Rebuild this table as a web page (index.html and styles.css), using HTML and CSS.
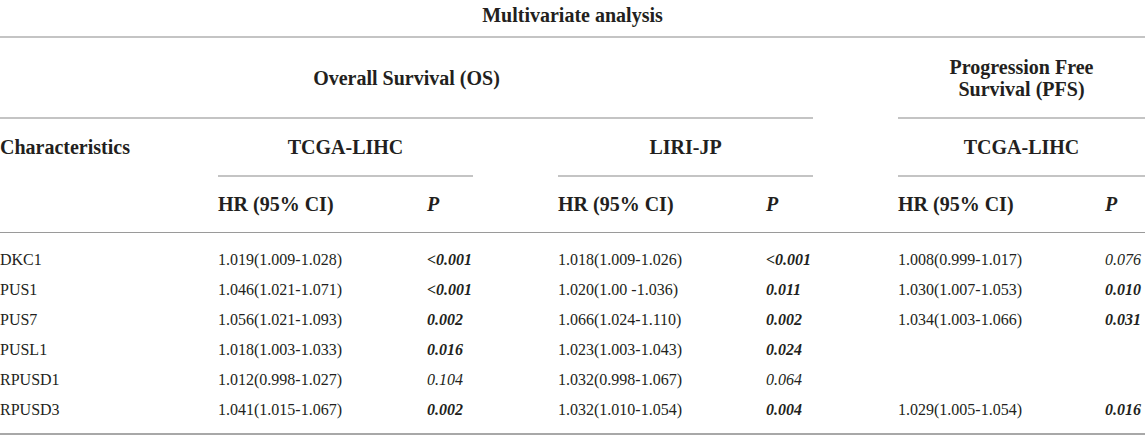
FILE: index.html
```html
<!DOCTYPE html>
<html lang="en">
<head>
<meta charset="utf-8">
<title>Multivariate analysis</title>
<link rel="stylesheet" href="styles.css">
</head>
<body>
<div class="table">
  <div class="title">Multivariate analysis</div>
  <div class="thead">
    <div class="group os">Overall Survival (OS)</div>
    <div class="group pfs">Progression Free<br>Survival (PFS)</div>

    <div class="char">Characteristics</div>
    <div class="cohort c-tcga">TCGA-LIHC</div>
    <div class="cohort c-liri">LIRI-JP</div>
    <div class="cohort c-pfs">TCGA-LIHC</div>

    <div class="sub"></div>
    <div class="sub">HR (95% CI)</div>
    <div class="sub pv">P</div>
    <div class="sub">HR (95% CI)</div>
    <div class="sub pv">P</div>
    <div class="sub">HR (95% CI)</div>
    <div class="sub pv">P</div>
  </div>
  <div class="tbody">
    <div>DKC1</div><div>1.019(1.009-1.028)</div><div class="sig">&lt;0.001</div><div>1.018(1.009-1.026)</div><div class="sig">&lt;0.001</div><div>1.008(0.999-1.017)</div><div class="ns">0.076</div>
    <div>PUS1</div><div>1.046(1.021-1.071)</div><div class="sig">&lt;0.001</div><div>1.020(1.00 -1.036)</div><div class="sig">0.011</div><div>1.030(1.007-1.053)</div><div class="sig">0.010</div>
    <div>PUS7</div><div>1.056(1.021-1.093)</div><div class="sig">0.002</div><div>1.066(1.024-1.110)</div><div class="sig">0.002</div><div>1.034(1.003-1.066)</div><div class="sig">0.031</div>
    <div>PUSL1</div><div>1.018(1.003-1.033)</div><div class="sig">0.016</div><div>1.023(1.003-1.043)</div><div class="sig">0.024</div><div></div><div></div>
    <div>RPUSD1</div><div>1.012(0.998-1.027)</div><div class="ns">0.104</div><div>1.032(0.998-1.067)</div><div class="ns">0.064</div><div></div><div></div>
    <div>RPUSD3</div><div>1.041(1.015-1.067)</div><div class="sig">0.002</div><div>1.032(1.010-1.054)</div><div class="sig">0.004</div><div>1.029(1.005-1.054)</div><div class="sig">0.016</div>
  </div>
</div>
</body>
</html>
```
FILE: styles.css
```css
* { box-sizing: border-box; }
html, body { margin: 0; padding: 0; background: #fff; }
body {
  font-family: "Liberation Serif", "Times New Roman", serif;
  color: #231f20;
  width: 1145px;
}
.table { width: 1145px; }

.title {
  height: 38px;
  font-size: 20px;
  font-weight: bold;
  line-height: 30px;
  text-align: center;
  border-bottom: 2px solid #c4c4c4;
}

.thead, .tbody {
  display: grid;
  grid-template-columns: 218px 209px 131px 208px 132px 207px 40px;
}

.thead {
  grid-template-rows: 81px 58px 56px;
  font-size: 20px;
  font-weight: bold;
}

.group, .cohort {
  display: flex;
  align-items: center;
  justify-content: center;
  text-align: center;
  line-height: 22px;
  border-bottom: 2px solid #c4c4c4;
}
.os { grid-column: 1 / 6; margin-right: 85px; }
.pfs { grid-column: 6 / 8; }

.char {
  grid-column: 1 / 2;
  display: flex;
  align-items: center;
  padding-bottom: 2px;
}
.c-tcga { grid-column: 2 / 4; margin-right: 85px; }
.c-liri { grid-column: 4 / 6; margin-right: 85px; }
.c-pfs { grid-column: 6 / 8; }

.sub {
  display: flex;
  align-items: center;
  border-bottom: 1px solid #9a9a9a;
  padding-bottom: 1px;
}
.pv { font-style: italic; }

.tbody {
  grid-auto-rows: 30px;
  padding: 12px 0 8px;
  border-bottom: 2px solid #a8a8a8;
  font-size: 16px;
  line-height: 30px;
  white-space: pre;
}
.sig { font-style: italic; font-weight: bold; }
.ns { font-style: italic; }
```
